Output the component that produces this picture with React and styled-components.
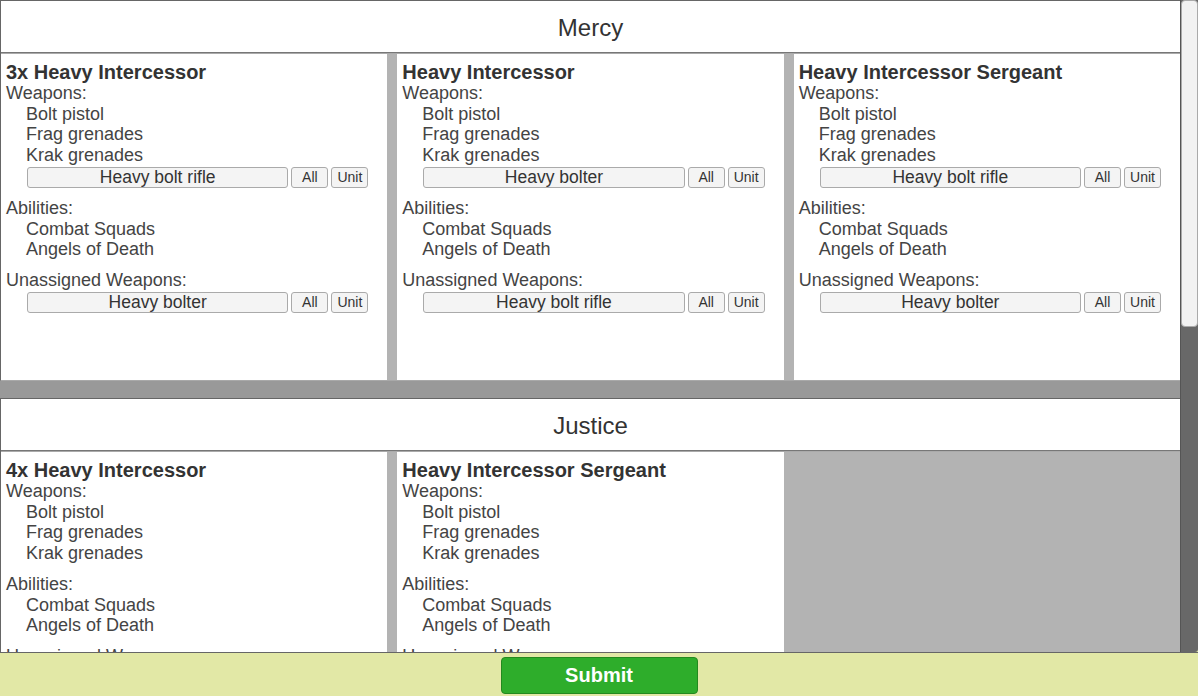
import React from "react";
import styled, { createGlobalStyle } from "styled-components";

const Global = createGlobalStyle`
  html, body { margin: 0; padding: 0; }
  body {
    font-family: "Liberation Sans", Arial, Helvetica, sans-serif;
    color: #444;
    background: #e2e8a6;
  }
  * { box-sizing: border-box; }
`;

const Page = styled.div`
  height: 100vh;
  display: flex;
  flex-direction: column;
`;

const Viewport = styled.div`
  flex: 1;
  min-height: 0;
  display: flex;
`;

const ScrollArea = styled.div`
  flex: 1;
  min-width: 0;
  overflow-y: auto;
  background: #999;
`;

const ScrollTrack = styled.div`
  flex: none;
  width: 18px;
  background: #686868;
  border-left: 1px solid #555;
  border-radius: 0 0 3px 0;
  display: flex;
  flex-direction: column;
`;

const ScrollThumb = styled.div`
  height: ${(p) => p.$size}px;
  background: #f2f2f2;
  border: 1px solid #aaa;
  border-radius: 4px;
`;

const Section = styled.section`
  border-top: 1px solid #666;
  border-left: 1px solid #666;
  border-bottom: 1px solid #a9a9a9;
  margin-bottom: 17px;
`;

const SectionHeader = styled.h2`
  margin: 0;
  background: #fff;
  padding: 13px 0 11px;
  line-height: 27px;
  font-size: 24px;
  font-weight: normal;
  text-align: center;
  color: #333;
  border-bottom: 1px solid #777;
`;

const CardGrid = styled.div`
  display: grid;
  grid-template-columns: repeat(3, 1fr);
  grid-auto-rows: minmax(326px, auto);
  gap: 10px;
  background: #b3b3b3;
  border-top: 1px solid #aaa;
`;

const Card = styled.div`
  background: #fff;
  padding: 7px 5px 10px;
  min-width: 0;
`;

const CardTitle = styled.div`
  font-size: 20px;
  font-weight: bold;
  line-height: 22px;
  color: #333;
`;

const Block = styled.div`
  margin-bottom: 10px;
`;

const Label = styled.div`
  font-size: 18px;
  line-height: 20.7px;
`;

const Item = styled.div`
  font-size: 18px;
  line-height: 20.7px;
  padding-left: 20px;
`;

const WeaponRow = styled.div`
  display: flex;
  gap: 3px;
  margin: 1px 14px 0 21px;
  height: 21px;
`;

const baseBtn = `
  background: #f4f4f4;
  border: 1px solid #aaa;
  border-radius: 3px;
  color: #333;
  font-family: "Liberation Sans", Arial, Helvetica, sans-serif;
  padding: 0;
  height: 21px;
  cursor: pointer;
`;

const WeaponSelect = styled.button`
  ${baseBtn}
  flex: 1;
  min-width: 0;
  font-size: 17.5px;
  line-height: 19px;
  text-align: center;
`;

const SmallButton = styled.button`
  ${baseBtn}
  width: 37px;
  flex: none;
  font-size: 14px;
  line-height: 19px;
`;

const Footer = styled.footer`
  flex: none;
  height: 44px;
  border-top: 1px solid #666;
  background: #e2e8a6;
  display: flex;
  justify-content: center;
  align-items: flex-start;
  padding-top: 4px;
`;

const SubmitButton = styled.button`
  width: 197px;
  height: 37px;
  background: #2ead2b;
  border: 1px solid #24891f;
  border-radius: 4px;
  color: #fff;
  font-family: "Liberation Sans", Arial, Helvetica, sans-serif;
  font-size: 20px;
  font-weight: bold;
  cursor: pointer;
`;

const BASE_WEAPONS = ["Bolt pistol", "Frag grenades", "Krak grenades"];
const ABILITIES = ["Combat Squads", "Angels of Death"];

const sections = [
  {
    name: "Mercy",
    units: [
      { title: "3x Heavy Intercessor", assigned: ["Heavy bolt rifle"], unassigned: ["Heavy bolter"] },
      { title: "Heavy Intercessor", assigned: ["Heavy bolter"], unassigned: ["Heavy bolt rifle"] },
      { title: "Heavy Intercessor Sergeant", assigned: ["Heavy bolt rifle"], unassigned: ["Heavy bolter"] },
    ],
  },
  {
    name: "Justice",
    units: [
      { title: "4x Heavy Intercessor", assigned: [], unassigned: ["Heavy bolt rifle"] },
      { title: "Heavy Intercessor Sergeant", assigned: [], unassigned: ["Heavy bolter"] },
    ],
  },
];

function Weapon({ name }) {
  return (
    <WeaponRow>
      <WeaponSelect type="button">{name}</WeaponSelect>
      <SmallButton type="button">All</SmallButton>
      <SmallButton type="button">Unit</SmallButton>
    </WeaponRow>
  );
}

function UnitCard({ unit }) {
  return (
    <Card>
      <CardTitle>{unit.title}</CardTitle>
      <Block>
        <Label>Weapons:</Label>
        {BASE_WEAPONS.map((w) => (
          <Item key={w}>{w}</Item>
        ))}
        {unit.assigned.map((w) => (
          <Weapon key={w} name={w} />
        ))}
      </Block>
      <Block>
        <Label>Abilities:</Label>
        {ABILITIES.map((a) => (
          <Item key={a}>{a}</Item>
        ))}
      </Block>
      <Block>
        <Label>Unassigned Weapons:</Label>
        {unit.unassigned.map((w) => (
          <Weapon key={w} name={w} />
        ))}
      </Block>
    </Card>
  );
}

export default function App() {
  return (
    <>
      <Global />
      <Page>
        <Viewport>
          <ScrollArea>
            {sections.map((s) => (
              <Section key={s.name}>
                <SectionHeader>{s.name}</SectionHeader>
                <CardGrid>
                  {s.units.map((u, i) => (
                    <UnitCard key={i} unit={u} />
                  ))}
                </CardGrid>
              </Section>
            ))}
          </ScrollArea>
          <ScrollTrack>
            <ScrollThumb $size={327} />
          </ScrollTrack>
        </Viewport>
        <Footer>
          <SubmitButton type="button">Submit</SubmitButton>
        </Footer>
      </Page>
    </>
  );
}
